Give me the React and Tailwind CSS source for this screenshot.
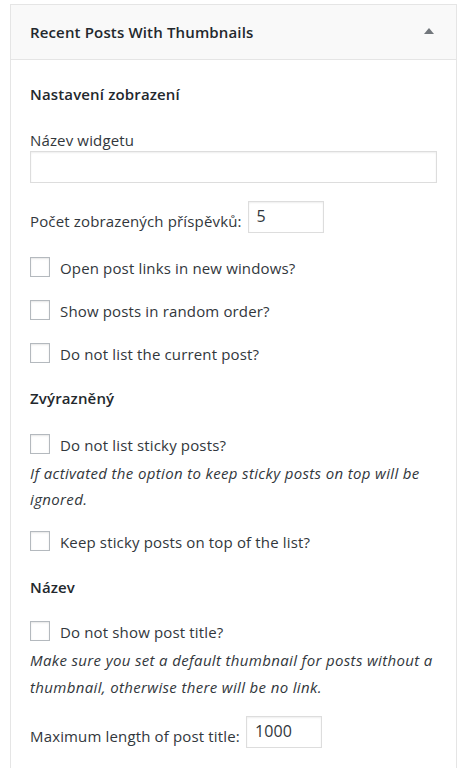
import React from "react";

const font = { fontFamily: '"Open Sans", "Noto Sans", sans-serif' };

function Checkbox({ label }) {
  return (
    <label className="flex h-5 items-center">
      <span className="h-5 w-5 shrink-0 border border-[#b4b9be] bg-white shadow-[inset_0_1px_2px_rgba(0,0,0,0.1)]" />
      <span className="ml-[10px] translate-y-[1px] leading-5">{label}</span>
    </label>
  );
}

function Heading({ children, className }) {
  return <h3 className={"h-5 font-semibold leading-5 text-[#23282d] " + className}>{children}</h3>;
}

function Hint({ children, className }) {
  return <p className={"italic tracking-[0.35px] " + className}>{children}</p>;
}

export default function App() {
  return (
    <div className="min-h-screen bg-white pl-[10px] pr-[9px] pt-[4px]" style={font}>
      <div className="min-h-[764px] border border-b-0 border-[#e5e5e5] bg-white text-[15px] tracking-[0.15px] text-[#32373c]">
        <div className="flex h-[55px] items-center justify-between border-b border-[#e5e5e5] bg-[#f9f9f9] pl-[19px] pr-[22px]">
          <span className="font-semibold text-[#23282d]">Recent Posts With Thumbnails</span>
          <svg width="10" height="6" viewBox="0 0 10 6" className="mb-[2px]">
            <path d="M0 6 L5 0 L10 6 Z" fill="#72777c" />
          </svg>
        </div>

        <div className="pl-[19px] pr-[19px]">
          <Heading className="mt-[24px]">Nastavení zobrazení</Heading>

          <p className="mt-[26px] h-5 leading-5">Název widgetu</p>
          <div className="mt-[1px] h-8 w-full border border-[#ddd] bg-white shadow-[inset_0_1px_2px_rgba(0,0,0,0.07)]" />

          <div className="mt-[18px] flex h-8 items-center">
            <span className="translate-y-[4px] leading-5">Počet zobrazených příspěvků:</span>
            <div className="ml-[6px] flex h-8 w-[76px] items-center border border-[#ddd] bg-white pl-[8px] pb-[2px] text-[16px] text-[#32373c] shadow-[inset_0_1px_2px_rgba(0,0,0,0.07)]">
              5
            </div>
          </div>

          <div className="mt-[24px]">
            <Checkbox label="Open post links in new windows?" />
          </div>
          <div className="mt-[23px]">
            <Checkbox label="Show posts in random order?" />
          </div>
          <div className="mt-[23px]">
            <Checkbox label="Do not list the current post?" />
          </div>

          <Heading className="mt-[25px]">Zvýrazněný</Heading>

          <div className="mt-[26px]">
            <Checkbox label="Do not list sticky posts?" />
          </div>
          <Hint className="mt-[6px] leading-[26px]">If activated the option to keep sticky posts on top will be ignored.</Hint>
          <div className="mt-[19px]">
            <Checkbox label="Keep sticky posts on top of the list?" />
          </div>

          <Heading className="mt-[26px]">Název</Heading>

          <div className="mt-[24px]">
            <Checkbox label="Do not show post title?" />
          </div>
          <Hint className="mt-[6px] leading-[27px]">
            Make sure you set a default thumbnail for posts without a thumbnail, otherwise there will be no link.
          </Hint>

          <div className="mt-[15px] flex h-8 items-center">
            <span className="translate-y-[4px] leading-5">Maximum length of post title:</span>
            <div className="ml-[6px] flex h-8 w-[76px] items-center border border-[#ddd] bg-white pl-[8px] pb-[2px] text-[16px] text-[#32373c] shadow-[inset_0_1px_2px_rgba(0,0,0,0.07)]">
              1000
            </div>
          </div>
        </div>
      </div>
    </div>
  );
}
